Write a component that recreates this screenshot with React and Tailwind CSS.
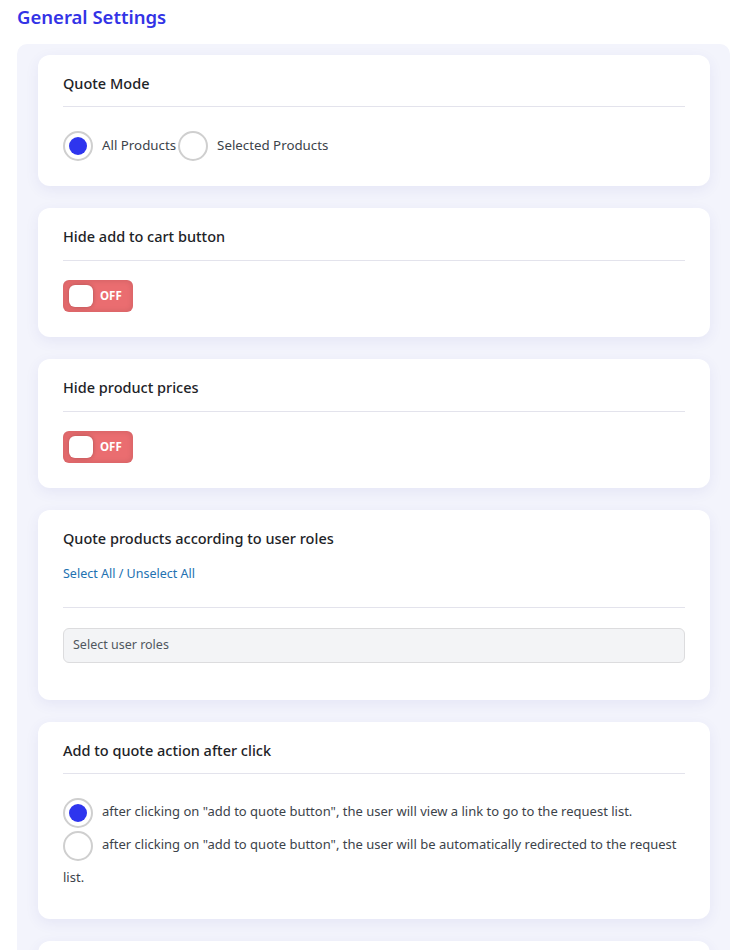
import React, { useState } from 'react';

function Card({ title, children, className = '' }) {
  return (
    <div className={`bg-white rounded-xl shadow-[0_4px_14px_rgba(60,70,160,0.08)] px-[25px] pt-[18px] ${className}`}>
      {title && <h3 className="text-[14.5px] font-medium text-[#1d2327] leading-5 m-0">{title}</h3>}
      {children}
    </div>
  );
}

function Radio({ checked, onClick }) {
  return (
    <span
      onClick={onClick}
      className="inline-flex align-middle items-center justify-center w-[30px] h-[30px] rounded-full border-2 border-[#cfcfcf] bg-white cursor-pointer shrink-0"
    >
      {checked && <span className="w-[18px] h-[18px] rounded-full bg-[#2e35ee]"></span>}
    </span>
  );
}

function Toggle({ on, onClick }) {
  return (
    <button
      onClick={onClick}
      className="flex items-center w-[70px] h-[32px] rounded-md bg-[#ea6d70] px-[6px] gap-[7px] shadow-[inset_0_0_6px_rgba(0,0,0,0.12)]"
    >
      <span className="w-[24px] h-[22px] rounded-md bg-white shadow-[0_0_4px_rgba(0,0,0,0.25)]"></span>
      <span className="text-[11.5px] font-bold text-white leading-none">{on ? 'ON' : 'OFF'}</span>
    </button>
  );
}

export default function App() {
  const [mode, setMode] = useState('all');
  const [hideCart, setHideCart] = useState(false);
  const [hidePrice, setHidePrice] = useState(false);
  const [action, setAction] = useState('link');

  return (
    <div className="min-h-screen bg-white font-['Noto_Sans',sans-serif] pl-[17px] pr-[20px]">
      <h1 className="text-[18.5px] font-semibold text-[#3333e6] pt-[4px] leading-[26px] mb-[14px]">General Settings</h1>

      <div className="bg-[#f3f4fc] rounded-[10px] pt-[11px] pl-[21px] pr-[20px] pb-6 flex flex-col gap-[22px]">
        <Card title="Quote Mode" className="h-[131px]">
          <div className="border-t border-[#e3e3ec] mt-[13px]"></div>
          <div className="flex items-center mt-[24px]">
            <Radio checked={mode === 'all'} onClick={() => setMode('all')} />
            <span className="text-[13.3px] text-[#3c434a] ml-[9px] mr-[2px]">All Products</span>
            <Radio checked={mode === 'selected'} onClick={() => setMode('selected')} />
            <span className="text-[13.3px] text-[#3c434a] ml-[9px]">Selected Products</span>
          </div>
        </Card>

        <Card title="Hide add to cart button" className="h-[129px]">
          <div className="border-t border-[#e3e3ec] mt-[14px]"></div>
          <div className="mt-[19px]">
            <Toggle on={hideCart} onClick={() => setHideCart(!hideCart)} />
          </div>
        </Card>

        <Card title="Hide product prices" className="h-[129px]">
          <div className="border-t border-[#e3e3ec] mt-[14px]"></div>
          <div className="mt-[19px]">
            <Toggle on={hidePrice} onClick={() => setHidePrice(!hidePrice)} />
          </div>
        </Card>

        <Card title="Quote products according to user roles" className="h-[190px]">
          <div className="text-[12.5px] text-[#2271b1] mt-[16px] leading-5">
            <a href="#" className="hover:underline">Select All</a> / <a href="#" className="hover:underline">Unselect All</a>
          </div>
          <div className="border-t border-[#e3e3ec] mt-[23px]"></div>
          <div className="mt-[20px] h-[35px] rounded-md bg-[#f3f4f6] border border-[#dcdcde] flex items-center px-[9px] text-[12.5px] text-[#50575e]">
            Select user roles
          </div>
        </Card>

        <Card title="Add to quote action after click" className="h-[197px]">
          <div className="border-t border-[#e3e3ec] mt-[13px]"></div>
          <p className="mt-[21px] text-[13px] text-[#3c434a] leading-[33px]">
            <Radio checked={action === 'link'} onClick={() => setAction('link')} />
            <span className="ml-[9px]">after clicking on "add to quote button", the user will view a link to go to the request list.</span>
            <br />
            <Radio checked={action === 'redirect'} onClick={() => setAction('redirect')} />
            <span className="ml-[9px]">after clicking on "add to quote button", the user will be automatically redirected to the request list.</span>
          </p>
        </Card>

        {/* next card, only its top edge is in view */}
        <Card className="h-[129px]" />
      </div>
    </div>
  );
}
